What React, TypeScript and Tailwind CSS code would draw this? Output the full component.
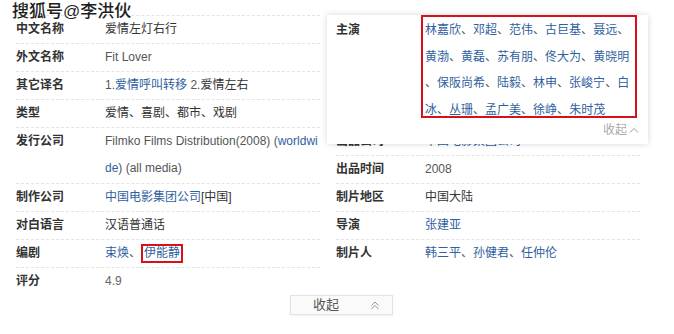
import React from "react"

const link = "text-[#2f5fa0]"

const Row = ({ label, children, tall }: { label: string; children: React.ReactNode; tall?: boolean }) => (
    <div className={`flex border-t border-dashed border-[#e3e3e3] ${tall ? "h-[56px]" : "h-[28px]"}`}>
        <div className="w-[89px] shrink-0 font-bold leading-[27px] text-[#333]">{label}</div>
        <div className="flex-1 leading-[27px]">{children}</div>
    </div>
)

const Sep = () => <span className="text-[#555]">、</span>

const actors = [
    ["林嘉欣", "邓超", "范伟", "古巨基", "聂远", ""],
    ["黄渤", "黄磊", "苏有朋", "佟大为", "黄晓明"],
    ["", "保阪尚希", "陆毅", "林申", "张峻宁", "白"],
    ["冰", "丛珊", "孟广美", "徐峥", "朱时茂"],
]

const ChevUp = ({ double }: { double?: boolean }) => (
    <svg width="10" height={double ? 9 : 6} viewBox={double ? "0 0 10 9" : "0 0 10 6"} fill="none" stroke="#999" strokeWidth="1">
        {double ? (
            <>
                <polyline points="1.5,4.5 5,1 8.5,4.5" />
                <polyline points="1.5,8 5,4.5 8.5,8" />
            </>
        ) : (
            <polyline points="1,5.5 5,1.5 9,5.5" />
        )}
    </svg>
)

export default function App() {
    return (
        <div className="relative w-[674px] h-[334px] overflow-hidden bg-white text-[12px] text-[#333] font-['Liberation_Sans','Noto_Sans_CJK_SC',sans-serif]">
            <div className="flex gap-4 px-4 pt-[15px]">
                {/* left column */}
                <div className="w-[304px]">
                    <Row label="中文名称">爱情左灯右行</Row>
                    <Row label="外文名称"><span className="text-[#555]">Fit Lover</span></Row>
                    <Row label="其它译名">
                        <span className="text-[#555]">1.</span><span className={link}>爱情呼叫转移</span> <span className="text-[#555]">2.</span>爱情左右
                    </Row>
                    <Row label="类型">爱情、喜剧、都市、戏剧</Row>
                    <Row label="发行公司" tall>
                        <div className="whitespace-nowrap text-[#555]">Filmko Films Distribution(2008) (<span className={link}>worldwi</span></div>
                        <div className="whitespace-nowrap text-[#555]"><span className={link}>de</span>) (all media)</div>
                    </Row>
                    <Row label="制作公司"><span className={link}>中国电影集团公司</span>[中国]</Row>
                    <Row label="对白语言">汉语普通话</Row>
                    <Row label="编剧">
                        <span className={link}>束焕</span><Sep />
                        <span className={`inline-block border-2 border-[#d7111b] px-[1px] leading-[15px] ${link}`}>伊能静</span>
                    </Row>
                    <Row label="评分"><span className="text-[#666]">4.9</span></Row>
                </div>

                {/* right column */}
                <div className="relative w-[304px]">
                    <Row label="主演"><span className={link}>林嘉欣</span></Row>
                    <Row label="片长">95分钟</Row>
                    <Row label="上映时间">2008年</Row>
                    <Row label="对白语言">汉语普通话</Row>
                    <Row label="出品公司"><span className={link}>中国电影集团公司</span></Row>
                    <Row label="出品时间"><span className="text-[#555]">2008</span></Row>
                    <Row label="制片地区">中国大陆</Row>
                    <Row label="导演"><span className={link}>张建亚</span></Row>
                    <Row label="制片人">
                        <span className={link}>韩三平</span><Sep /><span className={link}>孙健君</span><Sep /><span className={link}>任仲伦</span>
                    </Row>

                    {/* expanded cast popup */}
                    <div className="absolute left-[-9px] top-0 w-[321px] h-[129px] bg-white shadow-[0_0_6px_rgba(0,0,0,0.16)]">
                        <div className="flex pl-[9px] pt-[2px]">
                            <div className="w-[89px] shrink-0 font-bold leading-[27px]">主演</div>
                            <div>
                                {actors.map((line, i) => (
                                    <div key={i} className="whitespace-nowrap leading-[26.7px]">
                                        {line.map((n, j) => (
                                            <React.Fragment key={j}>
                                                {j > 0 && <Sep />}
                                                {n && <span className={`${link} ${i === 3 ? "underline underline-offset-2" : ""}`}>{n}</span>}
                                            </React.Fragment>
                                        ))}
                                    </div>
                                ))}
                            </div>
                        </div>
                        <div className="absolute left-[94px] top-0 w-[216px] h-[103px] border-2 border-[#d7111b]" />
                        <div className="absolute left-[276px] top-[106px] flex items-center gap-[2px] leading-[18px] text-[#aaa]">
                            收起<ChevUp />
                        </div>
                    </div>
                </div>
            </div>

            <div className="ml-[290px] flex h-[20px] w-[103px] items-center border border-[#e3e3e3] bg-[#fafafa] pl-[22px] text-[13px] text-[#555] shadow-[0_1px_2px_rgba(0,0,0,0.06)]">
                <span className="leading-[18px]">收起</span>
                <span className="ml-[31px] flex items-center"><ChevUp double /></span>
            </div>

            <div className="absolute left-[12px] top-[1px] text-[17px] leading-[22px] font-medium text-[#1e1e1e] [text-shadow:1px_0_0_#fff,-1px_0_0_#fff,0_1px_0_#fff,0_-1px_0_#fff,1px_1px_0_#fff,-1px_-1px_0_#fff]">
                搜狐号@李洪伙
            </div>
        </div>
    )
}
